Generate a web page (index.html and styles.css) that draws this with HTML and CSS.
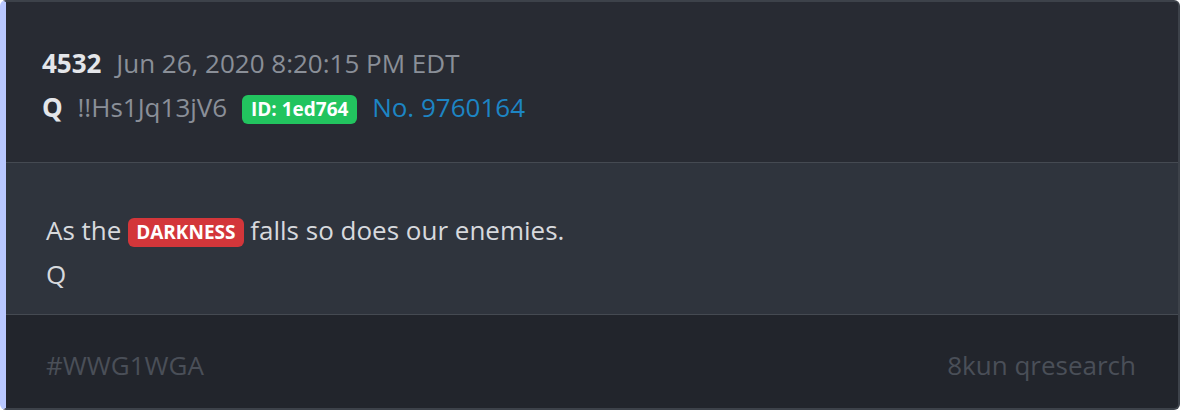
FILE: index.html
```html
<!DOCTYPE html>
<html lang="en">
<head>
    <meta charset="UTF-8">
    <meta name="viewport" content="width=device-width, initial-scale=1.0">
    <title>Post 4532</title>
    <link rel="stylesheet" href="styles.css">
</head>
<body>
    <div class="post">
        <div class="post-head">
            <div class="line">
                <span class="num">4532</span>
                <span class="date">Jun 26, 2020 8:20:15 PM EDT</span>
            </div>
            <div class="line">
                <span class="name">Q</span>
                <span class="trip">!!Hs1Jq13jV6</span>
                <span class="badge green">ID: 1ed764</span>
                <a class="ref" href="#">No. 9760164</a>
            </div>
        </div>

        <div class="post-body">
            <div class="line">As the <span class="badge red">DARKNESS</span> falls so does our enemies.</div>
            <div class="line">Q</div>
        </div>

        <div class="post-foot">
            <span>#WWG1WGA</span>
            <span>8kun qresearch</span>
        </div>
    </div>
</body>
</html>
```

FILE: styles.css
```css
body { margin: 0; padding: 0; background: #fff; font-family: 'Open Sans', 'Noto Sans', sans-serif; }
.post { height: 410px; box-sizing: border-box; border: 2px solid #3d424a; border-left: 6px solid #b9c8ff; border-radius: 6px; overflow: hidden; background: #22252c; font-size: 26px; }
.line { line-height: 44px; white-space: nowrap; }
.post-head { background: #282b33; padding: 39px 36px 33px; border-bottom: 1px solid #454a52; }
.num, .name { font-weight: 700; color: #e4e6ea; margin-right: 8px; }
.date, .trip { color: #8a8f98; }
.trip { margin-right: 8px; }
.badge { display: inline-block; font-size: 19px; font-weight: 700; color: #fff; line-height: 29px; padding: 0 9px; border-radius: 6px; vertical-align: 1px; }
.green { background: #22c45f; margin-right: 8px; }
.red { background: #d3363a; padding: 0 8px; }
.ref { color: #1d85c4; text-decoration: none; }
.post-body { background: #2f343d; padding: 45px 40px 18px; color: #d7d9dd; border-bottom: 1px solid #454a52; }
.post-foot { display: flex; justify-content: space-between; padding: 28px 42px 0 40px; line-height: 44px; color: #4a4f58; }
```
